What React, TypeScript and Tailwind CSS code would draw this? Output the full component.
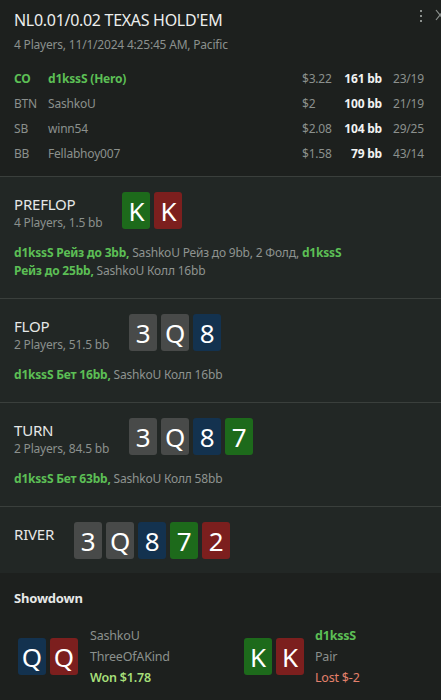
import React from "react";

type Card = { r: string; c: "g" | "r" | "b" | "k" };

const cardBg: Record<Card["c"], string> = {
  g: "bg-[#1d6a1b]",
  r: "bg-[#7c1f1e]",
  b: "bg-[#13324f]",
  k: "bg-[#484a49]",
};

function Cards({ cards }: { cards: Card[] }) {
  return (
    <div className="flex gap-1">
      {cards.map((c, i) => (
        <div
          key={i}
          className={`w-[28px] h-[37px] rounded-[3px] flex items-center justify-center text-white text-[26px] leading-none ${cardBg[c.c]}`}
        >
          {c.r}
        </div>
      ))}
    </div>
  );
}

const players = [
  { pos: "CO", name: "d1kssS (Hero)", cash: "$3.22", bb: "161 bb", stat: "23/19", hero: true },
  { pos: "BTN", name: "SashkoU", cash: "$2", bb: "100 bb", stat: "21/19" },
  { pos: "SB", name: "winn54", cash: "$2.08", bb: "104 bb", stat: "29/25" },
  { pos: "BB", name: "Fellabhoy007", cash: "$1.58", bb: "79 bb", stat: "43/14" },
];

function Street({
  name,
  info,
  cards,
  children,
}: {
  name: string;
  info?: string;
  cards: Card[];
  children?: React.ReactNode;
}) {
  return (
    <section className={`border-t border-[#3a3f3c] bg-[#222725] px-[14px] pt-[15px] ${children ? "pb-[18px]" : "pb-[14px]"}`}>
      <div className="flex items-start gap-5">
        <div className="pt-[2px]">
          <div className="text-[15px] leading-[20px] tracking-[-0.2px] text-[#e6e8e7]">{name}</div>
          {info && <div className="text-[12px] leading-[18px] tracking-[-0.2px] text-[#8b908d]">{info}</div>}
        </div>
        <Cards cards={cards} />
      </div>
      {children && (
        <div className="mt-[12px] text-[12px] leading-[18px] tracking-[-0.2px] text-[#8e9390]">{children}</div>
      )}
    </section>
  );
}

const G = ({ children }: { children: React.ReactNode }) => (
  <span className="font-bold text-[#5cbf55]">{children}</span>
);

export default function App() {
  const font = { fontFamily: '"Noto Sans", "Open Sans", sans-serif' };
  return (
    <div className="w-[441px] h-[700px] overflow-hidden bg-[#1d201e] text-[#d8dbd9] flex flex-col" style={font}>
      <header className="relative px-[14px] pt-[8px] pb-[10px]">
        <h1 className="text-[16px] leading-[24px] tracking-[-0.3px] text-[#eceeed]">NL0.01/0.02 TEXAS HOLD'EM</h1>
        <div className="text-[12px] leading-[18px] tracking-[-0.2px] text-[#8b908d] mt-[4px]">
          4 Players, 11/1/2024 4:25:45 AM, Pacific
        </div>
        <div className="absolute right-[19px] top-[10px] flex flex-col gap-[3px]">
          <span className="w-[2px] h-[2px] bg-[#8b908d]" />
          <span className="w-[2px] h-[2px] bg-[#8b908d]" />
          <span className="w-[2px] h-[2px] bg-[#8b908d]" />
        </div>
        <svg className="absolute right-[-4px] top-[9px]" width="10" height="12" viewBox="0 0 10 12">
          <path d="M1 1 L9 11 M9 1 L1 11" stroke="#8b908d" strokeWidth="1.2" />
        </svg>
        <div className="mt-[12px] flex flex-col">
          {players.map((p) => (
            <div key={p.pos} className="flex items-center h-[25px] text-[12px] tracking-[-0.2px] whitespace-nowrap">
              <span className={`w-[34px] ${p.hero ? "text-[#5cbf55] font-bold" : "text-[#8b908d]"}`}>{p.pos}</span>
              <span className={`flex-1 ${p.hero ? "text-[#5cbf55] font-bold" : "text-[#8b908d]"}`}>{p.name}</span>
              <span className="w-[34px] text-[#8b908d]">{p.cash}</span>
              <span className="w-[46px] text-right font-bold text-[#f2f3f2]">{p.bb}</span>
              <span className="w-[45px] pl-[11px] text-[#8b908d]">{p.stat}</span>
            </div>
          ))}
        </div>
      </header>

      <Street
        name="PREFLOP"
        info="4 Players, 1.5 bb"
        cards={[
          { r: "K", c: "g" },
          { r: "K", c: "r" },
        ]}
      >
        <G>d1kssS Рейз до 3bb,</G> SashkoU Рейз до 9bb, 2 Фолд, <G>d1kssS</G>
        <br />
        <G>Рейз до 25bb,</G> SashkoU Колл 16bb
      </Street>

      <Street
        name="FLOP"
        info="2 Players, 51.5 bb"
        cards={[
          { r: "3", c: "k" },
          { r: "Q", c: "k" },
          { r: "8", c: "b" },
        ]}
      >
        <G>d1kssS Бет 16bb,</G> SashkoU Колл 16bb
      </Street>

      <Street
        name="TURN"
        info="2 Players, 84.5 bb"
        cards={[
          { r: "3", c: "k" },
          { r: "Q", c: "k" },
          { r: "8", c: "b" },
          { r: "7", c: "g" },
        ]}
      >
        <G>d1kssS Бет 63bb,</G> SashkoU Колл 58bb
      </Street>

      <Street
        name="RIVER"
        cards={[
          { r: "3", c: "k" },
          { r: "Q", c: "k" },
          { r: "8", c: "b" },
          { r: "7", c: "g" },
          { r: "2", c: "r" },
        ]}
      />

      <section className="flex-1 bg-[#1d201e] px-[14px] pt-[16px]">
        <div className="text-[13px] leading-[18px] font-bold tracking-[-0.2px] text-[#e6e8e7]">Showdown</div>
        <div className="mt-[18px] flex">
          <div className="flex items-center w-[230px] pl-[4px]">
            <Cards cards={[{ r: "Q", c: "b" }, { r: "Q", c: "r" }]} />
            <div className="ml-[12px] text-[12.5px] leading-[21px] tracking-[-0.2px]">
              <div className="text-[#8b908d]">SashkoU</div>
              <div className="text-[#8b908d]">ThreeOfAKind</div>
              <div className="font-semibold text-[#a6df7a]">Won $1.78</div>
            </div>
          </div>
          <div className="flex items-center">
            <Cards cards={[{ r: "K", c: "g" }, { r: "K", c: "r" }]} />
            <div className="ml-[11px] text-[12.5px] leading-[21px] tracking-[-0.2px]">
              <div className="font-bold text-[#5cbf55]">d1kssS</div>
              <div className="text-[#8b908d]">Pair</div>
              <div className="text-[#e4806c]">Lost $-2</div>
            </div>
          </div>
        </div>
      </section>
    </div>
  );
}
